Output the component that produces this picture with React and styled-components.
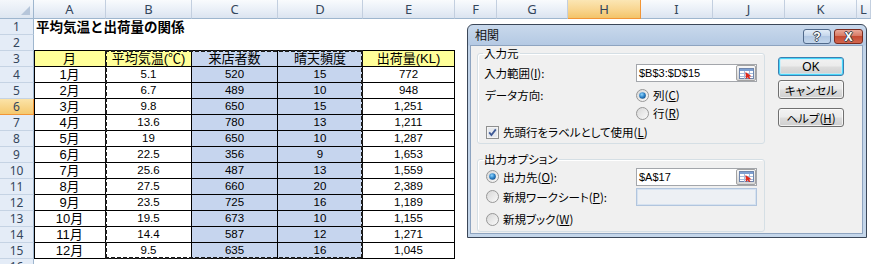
import React from 'react'
import styled, { createGlobalStyle, css } from 'styled-components'

const GlobalStyle = createGlobalStyle`
  html, body { margin: 0; padding: 0; background: #fff; }
  body {
    font-family: "Liberation Sans", "Noto Sans CJK JP", sans-serif;
    overflow: hidden;
  }
`

const COLS = ['A', 'B', 'C', 'D', 'E', 'F', 'G', 'H', 'I', 'J', 'K', 'L']
const WIDTHS = [34, 72, 86, 86, 85, 92, 42, 71, 73, 72, 72, 72, 14]

const HEADS = ['月', '平均気温(℃)', '来店者数', '晴天頻度', '出荷量(KL)']
const ROWS = [
  ['1月', '5.1', '520', '15', '772'],
  ['2月', '6.7', '489', '10', '948'],
  ['3月', '9.8', '650', '15', '1,251'],
  ['4月', '13.6', '780', '13', '1,211'],
  ['5月', '19', '650', '10', '1,287'],
  ['6月', '22.5', '356', '9', '1,653'],
  ['7月', '25.6', '487', '13', '1,559'],
  ['8月', '27.5', '660', '20', '2,389'],
  ['9月', '23.5', '725', '16', '1,189'],
  ['10月', '19.5', '673', '10', '1,155'],
  ['11月', '14.4', '587', '12', '1,271'],
  ['12月', '9.5', '635', '16', '1,045'],
]

const Page = styled.div`
  position: relative;
  width: 871px;
  height: 264px;
  overflow: hidden;
  background: #fff;
`

/* ---------- spreadsheet ---------- */

const Sheet = styled.div`
  position: relative;
  display: grid;
  grid-template-columns: ${WIDTHS.map((w) => w + 'px').join(' ')};
  grid-template-rows: 19px repeat(16, 16px);
`

const Corner = styled.div`
  position: relative;
  box-sizing: border-box;
  background: linear-gradient(#f4f7fb, #dde6f1);
  border-right: 1px solid #9eb6ce;
  border-bottom: 1px solid #9eb6ce;
  &::after {
    content: '';
    position: absolute;
    right: 3px;
    bottom: 3px;
    border-left: 9px solid transparent;
    border-bottom: 9px solid #b6c6da;
  }
`

const ColHead = styled.div`
  box-sizing: border-box;
  display: flex;
  align-items: center;
  justify-content: center;
  font-family: "Noto Sans", sans-serif;
  font-size: 13px;
  line-height: 1;
  color: #34465c;
  border-right: 1px solid #c3cfdf;
  border-bottom: 1px solid #9eb6ce;
  background: linear-gradient(#f9fbfd, #e9eff7 55%, #dbe4f0);
  ${(p) =>
    p.$active &&
    css`
      background: linear-gradient(#fbe6b4, #f8d58f 55%, #f3c469);
      border-right-color: #f29536;
      border-bottom-color: #f29536;
    `}
`

const RowHead = styled.div`
  box-sizing: border-box;
  display: flex;
  align-items: center;
  justify-content: center;
  font-family: "Noto Sans", sans-serif;
  font-size: 12px;
  line-height: 12px;
  color: #34465c;
  background: #e4ecf7;
  border-right: 1px solid #9eb6ce;
  border-bottom: 1px solid #c5d3e4;
  ${(p) =>
    p.$active &&
    css`
      background: linear-gradient(#fbe3a8, #f5c96f);
      border-right-color: #f29536;
      border-bottom-color: #f29536;
    `}
`

const Cell = styled.div`
  box-sizing: border-box;
  display: flex;
  align-items: center;
  justify-content: center;
  white-space: nowrap;
  color: #000;
  font-size: ${(p) => (p.$num ? '11.5px' : '13px')};
  line-height: 1;
  background: ${(p) => p.$fill || 'transparent'};
  ${(p) =>
    p.$table &&
    css`
      border-right: 1px solid #000;
      border-bottom: 1px solid #000;
    `}
  ${(p) => p.$left && css`box-shadow: inset 1px 0 0 #000;`}
  ${(p) => p.$top && css`border-bottom: 1px solid #000;`}
`

const Filler = styled.div`
  grid-column: span ${(p) => p.$span};
`

const TitleCell = styled.div`
  grid-column: span 12;
  display: flex;
  align-items: center;
  padding-left: 2px;
  font-family: "Noto Sans CJK JP", sans-serif;
  font-weight: 700;
  font-size: 13.5px;
  line-height: 1;
  color: #000;
`

const dash = (dir) =>
  `repeating-linear-gradient(${dir}, #1c1c1c 0 4px, transparent 4px 6px)`

/* copy marquee drawn over B3:D15 */
const Marquee = styled.div`
  position: absolute;
  inset: -1px 0 0 -1px;
  grid-column: 3 / 6;
  grid-row: 4 / 17;
  pointer-events: none;
  z-index: 1;
  background:
    ${dash('90deg')} top / 100% 2px no-repeat,
    ${dash('90deg')} bottom / 100% 2px no-repeat,
    ${dash('180deg')} left / 2px 100% no-repeat,
    ${dash('180deg')} right / 2px 100% no-repeat;
`

const SELECT = '#c6d5ee'
const YELLOW = '#ffff99'

function SheetGrid() {
  const cells = [<Corner key="corner" />]
  COLS.forEach((c) => cells.push(<ColHead key={c} $active={c === 'H'}>{c}</ColHead>))
  for (let r = 1; r <= 16; r++) {
    cells.push(<RowHead key={'rh' + r} $active={r === 6}>{r}</RowHead>)
    if (r === 1) {
      cells.push(<TitleCell key="title">平均気温と出荷量の関係</TitleCell>)
    } else if (r === 2) {
      for (let c = 0; c < 5; c++) cells.push(<Cell key={'e' + c} $top />)
      cells.push(<Filler key="f2" $span={7} />)
    } else if (r <= 15) {
      const vals = r === 3 ? HEADS : ROWS[r - 4]
      vals.forEach((v, c) => {
        const sel = c === 2 || c === 3
        const fill = sel ? SELECT : r === 3 ? YELLOW : 'transparent'
        cells.push(
          <Cell key={r + '-' + c} $table $left={c === 0} $fill={fill} $num={r > 3 && c > 0}>
            {v}
          </Cell>
        )
      })
      cells.push(<Filler key={'f' + r} $span={7} />)
    } else {
      cells.push(<Filler key="f16" $span={12} />)
    }
  }
  cells.push(<Marquee key="marquee" />)
  return <Sheet>{cells}</Sheet>
}

/* ---------- dialog ---------- */

const Dialog = styled.div`
  position: absolute;
  left: 467px;
  top: 24px;
  width: 400px;
  height: 214px;
  box-sizing: border-box;
  display: flex;
  flex-direction: column;
  padding: 0 3px 3px 2px;
  border: 1px solid #3b4758;
  border-radius: 6px 6px 0 0;
  background: linear-gradient(#c9d9ec, #b4c9e3 20px, #c2d4e9 21px, #c4d6ea);
  font-family: "Noto Sans CJK JP", sans-serif;
  font-size: 11px;
  font-feature-settings: "palt";
  color: #000;
`

const TitleBar = styled.div`
  height: 20px;
  display: flex;
  align-items: flex-start;
  justify-content: space-between;
  padding: 0 0 0 5px;
`

const TitleText = styled.span`
  font-size: 12px;
  line-height: 20px;
  color: #111;
`

const TitleButtons = styled.div`
  display: flex;
  gap: 3px;
  padding-top: 4px;
`

const CaptionButton = styled.div`
  box-sizing: border-box;
  width: ${(p) => (p.$close ? 29 : 28)}px;
  height: 15px;
  border-radius: 3px;
  display: flex;
  align-items: center;
  justify-content: center;
  font-family: "Liberation Sans", sans-serif;
  font-weight: 700;
  font-size: 12px;
  color: #fff;
  text-shadow: 1px 0 0 #3c4652, -1px 0 0 #3c4652, 0 1px 0 #3c4652, 0 -1px 0 #3c4652;
  border: 1px solid ${(p) => (p.$close ? '#7a2a1e' : '#50698a')};
  background: ${(p) =>
    p.$close
      ? 'linear-gradient(#e9a898, #d87a65 45%, #c54b33 50%, #d2654d)'
      : 'linear-gradient(#e3edf8, #c6d7ec 45%, #b2c8e3 50%, #c3d6ec)'};
`

const Client = styled.div`
  flex: 1;
  display: flex;
  padding: 0 0 0 6px;
  background: #f0f0f0;
  border: 1px solid #8ea4c0;
`

const LeftCol = styled.div`
  width: 288px;
  display: flex;
  flex-direction: column;
  gap: 8px;
`

const Group = styled.fieldset`
  margin: 0;
  padding: 0 6px 1px 6px;
  border: 1px solid #d5dfe5;
  border-radius: 3px;
  box-shadow: inset 1px 1px 0 #fff;
`

const Legend = styled.legend`
  padding: 0 1px;
  margin-left: -1px;
  line-height: 14px;
  font-size: 11.5px;
`

const Row = styled.div`
  box-sizing: border-box;
  height: ${(p) => p.$h}px;
  display: flex;
  align-items: ${(p) => (p.$top ? 'flex-start' : 'center')};
  padding-top: ${(p) => p.$pt || 0}px;
`

const Label = styled.span`
  width: ${(p) => p.$w || 152}px;
  flex: none;
  padding-left: ${(p) => p.$pl || 0}px;
  box-sizing: border-box;
  font-size: 11.5px;
  line-height: 14px;
  white-space: nowrap;
`

const Choice = styled.label`
  display: flex;
  align-items: center;
  gap: 4px;
  font-size: 11.5px;
  line-height: 14px;
  white-space: nowrap;
  padding-left: ${(p) => p.$pl || 0}px;
`

const RefBox = styled.div`
  box-sizing: border-box;
  width: 121px;
  height: 18px;
  display: flex;
  align-items: center;
  justify-content: space-between;
  padding: 0 0 0 2px;
  border: 1px solid #a3a6ab;
  background: #fff;
  font-family: "Liberation Sans", sans-serif;
  font-size: 11px;
  ${(p) =>
    p.$disabled &&
    css`
      height: 18px;
      background: #edf0f4;
      border-color: #b1c5de;
      box-shadow: inset 0 0 0 1px #d6e2f0;
    `}
`

const RefButton = styled.div`
  box-sizing: border-box;
  width: 20px;
  height: 16px;
  display: flex;
  align-items: center;
  justify-content: center;
  border: 1px solid #a2a2a2;
  border-radius: 2px;
  background: linear-gradient(#f8f8f8, #e4e4e4 50%, #d6d6d6);
`

const RightCol = styled.div`
  display: flex;
  flex-direction: column;
  padding: 11px 0 0 13px;
`

const Button = styled.div`
  box-sizing: border-box;
  width: 66px;
  height: 19px;
  margin-top: ${(p) => p.$mt || 0}px;
  display: flex;
  align-items: center;
  justify-content: center;
  border: 1px solid #707070;
  border-radius: 3px;
  background: linear-gradient(#f2f2f2, #ebebeb 48%, #dddddd 52%, #cfcfcf);
  box-shadow: inset 0 0 0 1px rgba(255, 255, 255, 0.7);
  font-size: 11.5px;
  line-height: 14px;
  ${(p) =>
    p.$default &&
    css`
      border-color: #3c7fb1;
      box-shadow: inset 0 0 0 1px #48d7fb, inset 0 0 0 2px rgba(190, 240, 255, 0.6);
      font-family: "Liberation Sans", sans-serif;
      font-size: 12px;
    `}
`

function RefIcon() {
  return (
    <svg width="15" height="11" viewBox="0 0 15 11">
      <rect x="0.5" y="0.5" width="14" height="10" fill="#fff" stroke="#6f86ad" />
      <rect x="1" y="1" width="13" height="2" fill="#7ea0d2" />
      <path d="M1 5.5h13M1 8.5h13M5.5 3v8M10.5 3v8" stroke="#a7bcdc" />
      <path d="M6.5 4l6 4.2-2.6.4 1.6 2.2-1.2.7-1.5-2.2-1.9 1.6z" fill="#e0281c" />
    </svg>
  )
}

function Radio({ checked }) {
  return (
    <svg width="13" height="13" viewBox="0 0 13 13">
      <defs>
        <linearGradient id="rb" x1="0" y1="0" x2="1" y2="1">
          <stop offset="0" stopColor="#d6d6d6" />
          <stop offset="1" stopColor="#fbfbfb" />
        </linearGradient>
        <radialGradient id="rd" cx="0.4" cy="0.35" r="0.7">
          <stop offset="0" stopColor="#8fd6ff" />
          <stop offset="0.6" stopColor="#2a7fc4" />
          <stop offset="1" stopColor="#174f86" />
        </radialGradient>
      </defs>
      <circle cx="6.5" cy="6.5" r="6" fill="url(#rb)" stroke="#979797" />
      {checked && <circle cx="6.5" cy="6.5" r="3.3" fill="url(#rd)" />}
    </svg>
  )
}

function CheckBox() {
  return (
    <svg width="13" height="13" viewBox="0 0 13 13">
      <rect x="0.5" y="0.5" width="12" height="12" fill="#f4f4f4" stroke="#8e8f8f" />
      <rect x="2" y="2" width="9" height="9" fill="#e6e9ee" />
      <path d="M3.2 6.4l2.2 2.6 4.4-5.6" fill="none" stroke="#3f5a96" strokeWidth="1.8" />
    </svg>
  )
}

function CorrelationDialog() {
  return (
    <Dialog>
      <TitleBar>
        <TitleText>相関</TitleText>
        <TitleButtons>
          <CaptionButton>?</CaptionButton>
          <CaptionButton $close>X</CaptionButton>
        </TitleButtons>
      </TitleBar>
      <Client>
        <LeftCol>
          <Group>
            <Legend>入力元</Legend>
            <Row $h={26}>
              <Label>入力範囲(<u>I</u>):</Label>
              <RefBox>
                <span>$B$3:$D$15</span>
                <RefButton><RefIcon /></RefButton>
              </RefBox>
            </Row>
            <Row $h={18}>
              <Label $pl={1}>データ方向:</Label>
              <Choice><Radio checked /><span>列(<u>C</u>)</span></Choice>
            </Row>
            <Row $h={18}>
              <Label />
              <Choice><Radio /><span>行(<u>R</u>)</span></Choice>
            </Row>
            <Row $h={20}>
              <Choice $pl={2}><CheckBox /><span>先頭行をラベルとして使用(<u>L</u>)</span></Choice>
            </Row>
          </Group>
          <Group>
            <Legend>出力オプション</Legend>
            <Row $h={21}>
              <Label $pl={2}>
                <Choice as="span"><Radio checked /><span>出力先(<u>O</u>):</span></Choice>
              </Label>
              <RefBox>
                <span>$A$17</span>
                <RefButton><RefIcon /></RefButton>
              </RefBox>
            </Row>
            <Row $h={19}>
              <Label $pl={2}>
                <Choice as="span"><Radio /><span>新規ワークシート(<u>P</u>):</span></Choice>
              </Label>
              <RefBox $disabled />
            </Row>
            <Row $h={24} $top $pt={6}>
              <Choice $pl={2}><Radio /><span>新規ブック(<u>W</u>)</span></Choice>
            </Row>
          </Group>
        </LeftCol>
        <RightCol>
          <Button $default>OK</Button>
          <Button $mt={4}>キャンセル</Button>
          <Button $mt={9}>ヘルプ(<u>H</u>)</Button>
        </RightCol>
      </Client>
    </Dialog>
  )
}

export default function App() {
  return (
    <Page>
      <GlobalStyle />
      <SheetGrid />
      <CorrelationDialog />
    </Page>
  )
}
